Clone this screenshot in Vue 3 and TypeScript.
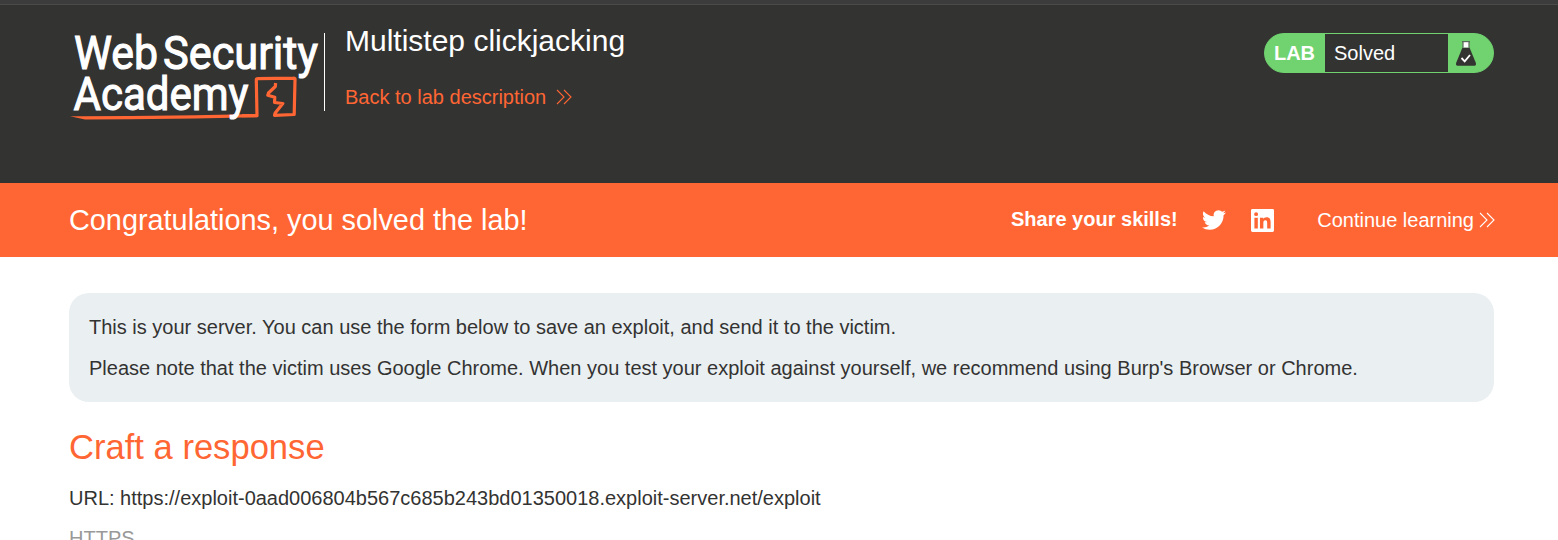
<script setup lang="ts">
const labTitle = 'Multistep clickjacking'
const notes: string[] = [
  'This is your server. You can use the form below to save an exploit, and send it to the victim.',
  "Please note that the victim uses Google Chrome. When you test your exploit against yourself, we recommend using Burp's Browser or Chrome.",
]
const exploitUrl = 'https://exploit-0aad006804b567c685b243bd01350018.exploit-server.net/exploit'
</script>

<template>
  <div class="page">
    <header class="header">
      <svg class="logo" width="254" height="100" viewBox="0 0 254 100" aria-label="Web Security Academy">
        <path class="swoosh" d="M0 95.200 L12 95.200 L60 95 L125 94.200 L187 93 L187 96.200 L125 97.400 L60 98.300 L15 98.600 Z" />
        <path class="mark" d="M172 94.700 L187 94.700 L186.300 58.800 Q186.200 57.600 188 57.600 L223.500 57.100 Q225.300 57 225 59 L224.200 93.500 L204.500 94.300 L205.200 92 L212.800 82.500 L204.500 81.500 L204.800 76.200 L197.800 74.200 L198.500 72 L205.300 65.500 L205.600 62" />
        <g class="logo-text">
          <text x="4" y="48" textLength="84" lengthAdjust="spacingAndGlyphs">Web</text>
          <text x="93" y="48" textLength="155" lengthAdjust="spacingAndGlyphs">Security</text>
          <text x="3.500" y="89" textLength="175" lengthAdjust="spacingAndGlyphs">Academy</text>
        </g>
      </svg>
      <div class="heading">
        <h2>{{ labTitle }}</h2>
        <a class="back">
          <span>Back to lab description</span>
          <svg class="chevrons" width="16" height="16" viewBox="0 0 16 16"><path d="M1 1 L8 8 L1 15 M8 1 L15 8 L8 15" /></svg>
        </a>
      </div>
      <div class="status">
        <span class="lab">LAB</span>
        <span class="state">Solved</span>
        <span class="flask">
          <svg width="22" height="26" viewBox="0 0 22 26">
            <path class="glass" d="M7.500 6.500 L1.300 21.500 Q.3 24.500 2.500 24.800 H19.500 Q21.700 24.500 20.700 21.500 L14.500 6.500 Z" />
            <path class="neck" d="M8.200 1 H13.800 V6.500 H8.200 Z" />
            <path class="rim" d="M7 .7 H15 M8 1 V6.500 M14 1 V6.500" />
            <path class="tick" d="M6.500 17 L9.700 20.300 L15 14" />
          </svg>
        </span>
      </div>
    </header>
    <section class="banner">
      <h4>Congratulations, you solved the lab!</h4>
      <div class="share">
        <span class="skills">Share your skills!</span>
        <svg class="twitter" width="24" height="24" viewBox="0 0 24 24"><path d="M23.950 4.570a10 10 0 0 1-2.820.780 4.960 4.960 0 0 0 2.160-2.730c-.950.560-2 .960-3.130 1.190a4.920 4.920 0 0 0-8.380 4.480C7.690 8.090 4.070 6.130 1.640 3.160a4.820 4.820 0 0 0-.670 2.480c0 1.710.870 3.210 2.190 4.100a4.900 4.900 0 0 1-2.230-.620v.060a4.920 4.920 0 0 0 3.950 4.830 5 5 0 0 1-2.210.080 4.940 4.940 0 0 0 4.600 3.420A9.870 9.870 0 0 1 0 19.540a14 14 0 0 0 7.550 2.210c9.050 0 14-7.500 14-13.980 0-.210 0-.420-.020-.630a9.940 9.940 0 0 0 2.420-2.570z" /></svg>
        <svg class="linkedin" width="23" height="23" viewBox="0 0 24 24"><path fill-rule="evenodd" d="M1.500 0H22.500Q24 0 24 1.500V22.500Q24 24 22.500 24H1.500Q0 24 0 22.500V1.500Q0 0 1.500 0ZM3.560 9V20.450H7.120V9ZM5.340 3.300A2.060 2.060 0 1 0 5.340 7.430A2.060 2.060 0 1 0 5.340 3.300ZM9.350 9V20.450H12.900V14.800C12.900 13.300 13.300 11.850 15.050 11.850C16.850 11.850 16.890 13.500 16.890 14.880V20.450H20.450V14.170C20.450 11 19.700 8.720 16.200 8.720C14.500 8.720 13.300 9.600 12.800 10.560V9Z" /></svg>
        <a class="continue">
          <span>Continue learning</span>
          <svg class="chevrons" width="16" height="16" viewBox="0 0 16 16"><path d="M1 1 L8 8 L1 15 M8 1 L15 8 L8 15" /></svg>
        </a>
      </div>
    </section>
    <main class="content">
      <div class="notice">
        <p v-for="note in notes" :key="note">{{ note }}</p>
      </div>
      <h1>Craft a response</h1>
      <p class="url">URL: {{ exploitUrl }}</p>
      <label class="https">HTTPS</label>
    </main>
  </div>
</template>

<style>
html,
body {
  overflow: hidden;
  background: #fff;
}
</style>

<style scoped>
.page {
  height: 540px;
  overflow: hidden;
  font: 20px/24px 'Liberation Sans', Arial, sans-serif;
  color: #333332;
}
h1, h2, h4, p {
  margin: 0;
  font-weight: 400;
}
.header {
  box-sizing: border-box;
  height: 183px;
  padding: 0 64px 0 70px;
  display: flex;
  align-items: flex-start;
  background: linear-gradient(#3c3c3c 4px, #4a4a49 4px, #4a4a49 5px, #333332 5px);
}
.logo {
  margin-top: 21px;
  overflow: visible;
}
.logo-text {
  font: 400 47px Roboto, sans-serif;
  fill: #fff;
  stroke: #fff;
  stroke-width: 1.1;
}
.swoosh {
  fill: #ff6633;
}
.mark {
  fill: none;
  stroke: #ff6633;
  stroke-width: 3.2;
  stroke-linejoin: round;
}
.heading {
  height: 78px;
  margin-top: 33px;
  border-left: 1px solid #fff;
  padding-left: 20px;
  display: flex;
  flex-direction: column;
  justify-content: space-between;
}
h2 {
  margin-top: -10px;
  font-size: 30px;
  line-height: 36px;
  color: #fff;
  white-space: nowrap;
}
.back {
  margin-bottom: 2px;
  display: flex;
  align-items: center;
  gap: 10px;
  color: #ff6633;
}
.chevrons {
  fill: none;
  stroke: currentColor;
  stroke-width: 1.1;
}
.status {
  box-sizing: border-box;
  width: 230px;
  height: 40px;
  margin: 33px 0 0 auto;
  border: 1px solid #70d36f;
  border-radius: 20px;
  overflow: hidden;
  display: flex;
  line-height: 38px;
  color: #fff;
  background: linear-gradient(90deg, #70d36f 61px, transparent 61px, transparent 184px, #70d36f 184px) border-box;
}
.lab {
  width: 59px;
  padding-right: 1px;
  text-align: center;
  font-weight: 700;
}
.state {
  flex: 1;
  padding-left: 9px;
}
.flask {
  width: 45px;
  padding: 7px 0 0 7px;
  box-sizing: border-box;
  line-height: 0;
}
.glass {
  fill: #333332;
}
.neck {
  fill: #fff;
}
.rim {
  fill: none;
  stroke: #555;
}
.tick {
  fill: none;
  stroke: #fff;
  stroke-width: 1.8;
}
.banner {
  height: 74px;
  padding: 0 63px 0 69px;
  display: flex;
  align-items: center;
  justify-content: space-between;
  background: #ff6633;
  color: #fff;
}
h4 {
  font-size: 28.85px;
  line-height: 36px;
}
.share {
  display: flex;
  align-items: center;
}
.skills {
  font-weight: 700;
  margin-top: -2px;
}
.twitter {
  margin-left: 24px;
}
.linkedin {
  margin-left: 25px;
}
.twitter, .linkedin {
  fill: #fff;
}
.continue {
  margin-left: 43.5px;
  display: flex;
  align-items: center;
  gap: 5px;
}
.content {
  padding: 36px 64px 0 69px;
}
.notice {
  box-sizing: border-box;
  height: 109px;
  padding: 22px 20px;
  border-radius: 20px;
  background: #eaeff2;
  display: flex;
  flex-direction: column;
  gap: 17px;
  white-space: nowrap;
}
h1 {
  margin-top: 25px;
  font-size: 34.6px;
  line-height: 40px;
  color: #ff6633;
}
.url {
  margin-top: 19px;
}
.https {
  display: block;
  margin-top: 16px;
  color: #999;
}
</style>
